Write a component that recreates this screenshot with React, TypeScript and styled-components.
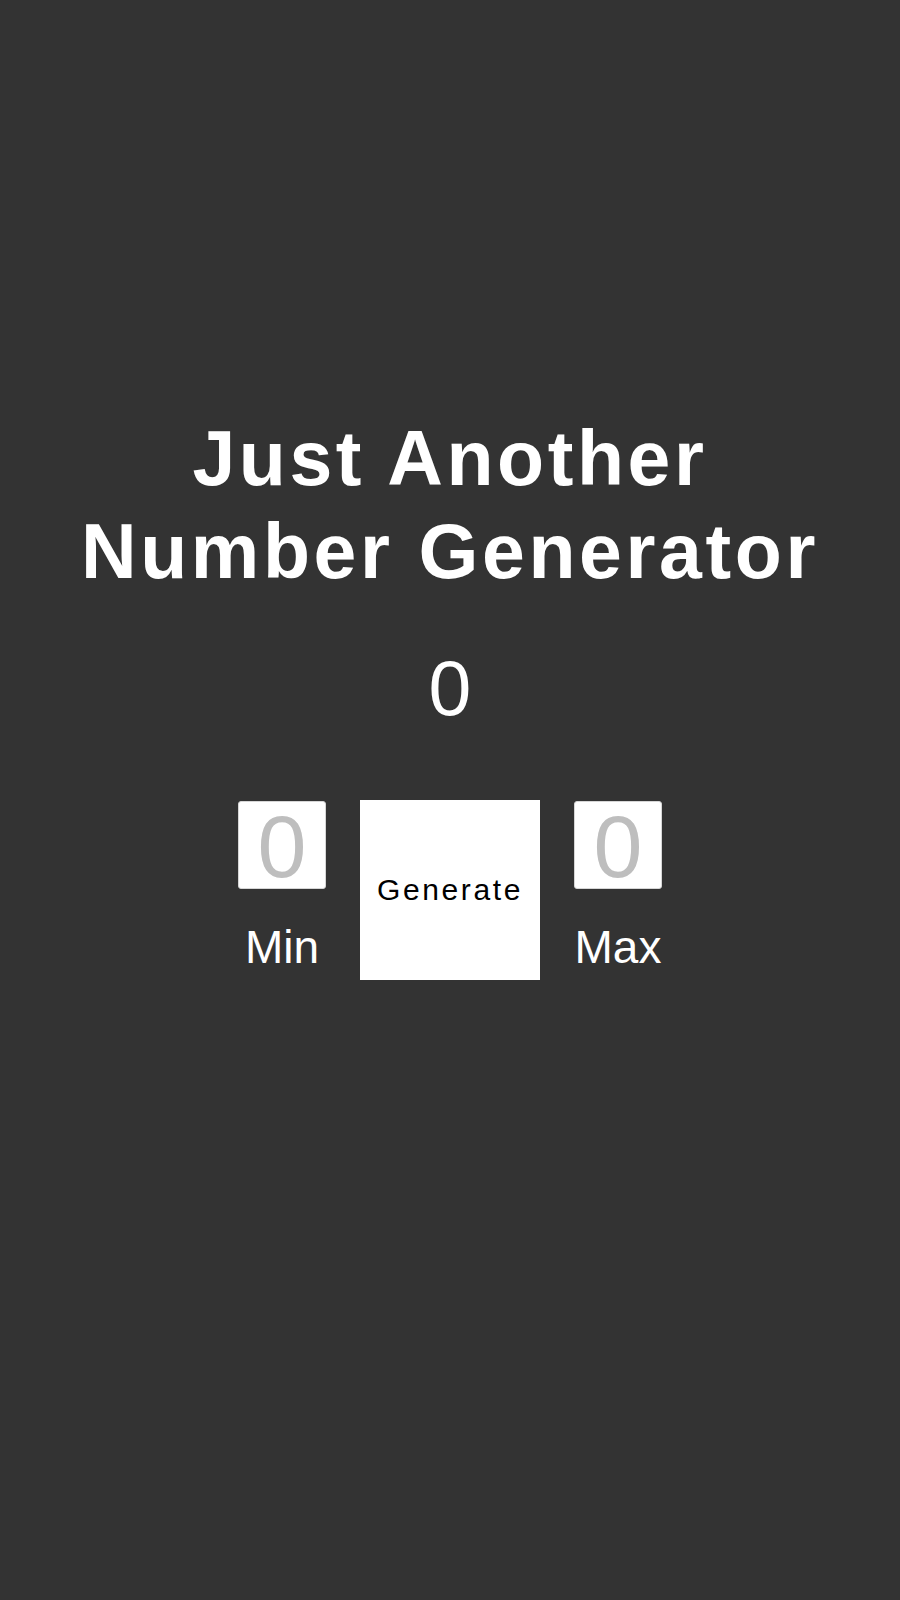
import React, { useState } from "react";
import styled, { createGlobalStyle } from "styled-components";

const GlobalStyle = createGlobalStyle`
  html, body {
    margin: 0;
    padding: 0;
    background: #333333;
  }
  body {
    font-family: "Liberation Sans", Arial, sans-serif;
    min-height: 1600px;
  }
`;

const Page = styled.main`
  display: flex;
  flex-direction: column;
  align-items: center;
  padding-top: 412px;
  color: #ffffff;
`;

const Title = styled.h1`
  margin: 0;
  font-size: 77px;
  font-weight: 700;
  line-height: 93px;
  letter-spacing: 3.6px;
  text-align: center;
`;

const Result = styled.div`
  margin-top: 47px;
  font-size: 77px;
  line-height: 87px;
`;

const Controls = styled.div`
  display: flex;
  align-items: flex-start;
  gap: 34px;
  margin-top: 68px;
`;

const Bound = styled.label`
  display: flex;
  flex-direction: column;
  align-items: center;
  width: 88px;
  padding-top: 1px;
`;

const NumberInput = styled.input`
  box-sizing: border-box;
  width: 88px;
  height: 88px;
  margin: 0;
  padding: 4px 0 0;
  border: 1px solid #d6d6d6;
  border-radius: 3px;
  background: #ffffff;
  font-family: "Liberation Sans", Arial, sans-serif;
  font-size: 88px;
  text-align: center;
  color: #bebebe;
  outline: none;

  &::placeholder {
    color: #bebebe;
  }
`;

const BoundLabel = styled.span`
  margin-top: 31px;
  font-size: 46px;
  line-height: 55px;
  color: #ffffff;
`;

const GenerateButton = styled.button`
  width: 180px;
  height: 180px;
  border: none;
  border-radius: 0;
  background: #ffffff;
  color: #000000;
  font-family: "Liberation Sans", Arial, sans-serif;
  font-size: 30px;
  letter-spacing: 2.6px;
  padding: 0;
  cursor: pointer;
`;

export default function App() {
  const [min, setMin] = useState("");
  const [max, setMax] = useState("");
  const [value, setValue] = useState(0);

  const generate = () => {
    const lo = Number(min) || 0;
    const hi = Number(max) || 0;
    setValue(Math.floor(lo + Math.random() * (hi - lo + 1)));
  };

  return (
    <>
      <GlobalStyle />
      <Page>
        <Title>
          Just Another
          <br />
          Number Generator
        </Title>
        <Result>{value}</Result>
        <Controls>
          <Bound>
            <NumberInput
              type="text"
              placeholder="0"
              value={min}
              onChange={(e) => setMin(e.target.value)}
            />
            <BoundLabel>Min</BoundLabel>
          </Bound>
          <GenerateButton onClick={generate}>Generate</GenerateButton>
          <Bound>
            <NumberInput
              type="text"
              placeholder="0"
              value={max}
              onChange={(e) => setMax(e.target.value)}
            />
            <BoundLabel>Max</BoundLabel>
          </Bound>
        </Controls>
      </Page>
    </>
  );
}
